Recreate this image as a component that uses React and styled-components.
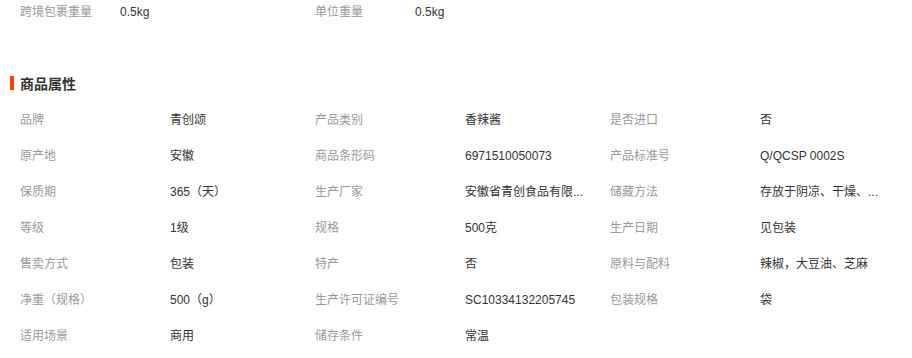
import React from "react";
import styled, { createGlobalStyle } from "styled-components";

const GlobalStyle = createGlobalStyle`
  body {
    margin: 0;
    background: #fff;
    font-family: "Liberation Sans", "Noto Sans CJK SC", sans-serif;
    font-size: 12px;
    color: #333;
  }
`;

const Page = styled.div`
  width: 912px;
  height: 358px;
  overflow: hidden;
`;

const TopRow = styled.div`
  display: flex;
  padding-left: 20px;
  height: 24px;
  line-height: 24px;
`;

const TopItem = styled.div`
  display: flex;
  width: 295px;
`;

const TopLabel = styled.span`
  width: 100px;
  color: #999;
`;

const Heading = styled.h3`
  display: flex;
  align-items: center;
  gap: 6px;
  margin: 49px 0 9px 10px;
  height: 20px;
  font-size: 14px;
  font-weight: bold;
  color: #333;
  &:before {
    content: "";
    width: 4px;
    height: 14px;
    background: #ff4400;
  }
`;

const Grid = styled.div`
  display: grid;
  grid-template-columns: repeat(3, 295px);
  padding-left: 20px;
`;

const Item = styled.div`
  display: flex;
  height: 36px;
  line-height: 36px;
`;

const Label = styled.span`
  width: 150px;
  flex: none;
  color: #999;
`;

const Value = styled.span`
  white-space: nowrap;
  color: #333;
`;

const props = [
  ["品牌", "青创颂"],
  ["产品类别", "香辣酱"],
  ["是否进口", "否"],
  ["原产地", "安徽"],
  ["商品条形码", "6971510050073"],
  ["产品标准号", "Q/QCSP 0002S"],
  ["保质期", "365（天）"],
  ["生产厂家", "安徽省青创食品有限..."],
  ["储藏方法", "存放于阴凉、干燥、..."],
  ["等级", "1级"],
  ["规格", "500克"],
  ["生产日期", "见包装"],
  ["售卖方式", "包装"],
  ["特产", "否"],
  ["原料与配料", "辣椒，大豆油、芝麻"],
  ["净重（规格）", "500（g）"],
  ["生产许可证编号", "SC10334132205745"],
  ["包装规格", "袋"],
  ["适用场景", "商用"],
  ["储存条件", "常温"],
];

export default function App() {
  return (
    <Page>
      <GlobalStyle />
      <TopRow>
        <TopItem>
          <TopLabel>跨境包裹重量</TopLabel>
          <span>0.5kg</span>
        </TopItem>
        <TopItem>
          <TopLabel>单位重量</TopLabel>
          <span>0.5kg</span>
        </TopItem>
      </TopRow>
      <Heading>商品属性</Heading>
      <Grid>
        {props.map(([k, v]) => (
          <Item key={k}>
            <Label>{k}</Label>
            <Value>{v}</Value>
          </Item>
        ))}
      </Grid>
    </Page>
  );
}
